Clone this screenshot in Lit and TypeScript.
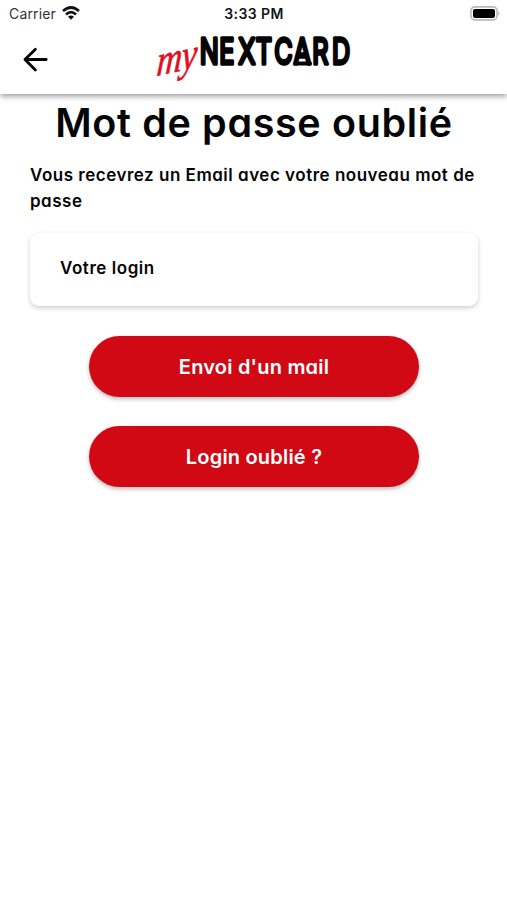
import { LitElement, html, css } from "lit";
import { customElement } from "lit/decorators.js";

@customElement("app-root")
export class AppRoot extends LitElement {
  static styles = css`
    :host { display: block; height: 900px; background: #fff; color: #050505; overflow: hidden;
      font-family: Inter, "Open Sans", sans-serif; font-weight: 600; font-feature-settings: "cv11"; }
    * { box-sizing: border-box; }
    svg { display: block; overflow: visible; }
    .top { height: 94px; background: #fff; box-shadow: 0 2px 6px rgba(0, 0, 0, 0.42); }
    .status { display: grid; grid-template-columns: 1fr auto 1fr; align-items: center; height: 28px;
      padding: 0 7px 0 9px; font-feature-settings: normal; font-size: 14px; }
    .carrier { display: flex; align-items: center; gap: 6px; font-weight: 400; color: #333; font-size: 14px; letter-spacing: 0.15px; margin-top: -1px; }
    .wifi { margin-top: -2px; }
    .clock { letter-spacing: 0.4px; color: #151515; margin: -2px 1px 0 0; }
    .battery { justify-self: end; margin-top: -1px; }
    .bar { display: grid; grid-template-columns: 155px 200px 1fr; height: 66px; }
    .back { padding: 18px 0 0 22px; }
    main { padding: 0 29px 0 30px; }
    h1 { margin: 0; height: 58px; line-height: 58px; font-size: 39.5px; font-weight: 600; text-align: center; white-space: nowrap; letter-spacing: 0.65px; }
    p { margin: 10px 0 0; font-size: 17px; line-height: 26px; white-space: nowrap; letter-spacing: 0.51px; }
    .field { margin-top: 19px; height: 73px; border-radius: 9px; padding: 0 30px; line-height: 70px;
      font-size: 17px; letter-spacing: 0.55px; box-shadow: 0 2px 5px rgba(0, 0, 0, 0.2); }
    .actions { display: flex; flex-direction: column; align-items: center; gap: 29px; padding-top: 30px; }
    button { width: 330px; height: 61px; border: 0; border-radius: 31px; background: #d00914; color: #fff;
      font: inherit; font-feature-settings: inherit; font-size: 20px; letter-spacing: 0.2px; padding: 1px 0 0; box-shadow: 0 2px 4px rgba(0, 0, 0, 0.28); }
    .my { font: italic 400 40px "Liberation Serif", serif; fill: #df1020; stroke: #df1020; stroke-width: 0.6; stroke-linejoin: round; }
    .next { font: 400 36px Inter, sans-serif; font-feature-settings: normal; fill: #050505; stroke: #050505;
      stroke-width: 3.6; stroke-linejoin: round; }
  `;

  render() {
    return html`
      <header class="top">
        <div class="status">
          <span class="carrier">Carrier
            <svg class="wifi" width="18" height="14" viewBox="0 0 18 14" fill="none" stroke="#111" stroke-width="2.7">
              <path d="M1 5Q9-2 17 5M4 8.4Q9 4 14 8.4" /><path d="M9 13.8L6 10.8Q9 8.4 12 10.8Z" fill="#111" stroke="none" />
            </svg>
          </span>
          <span class="clock">3:33 PM</span>
          <svg class="battery" width="30" height="15" viewBox="0 0 30 15">
            <rect x="0.9" y="0.9" width="26.2" height="13" rx="4" fill="#fff" stroke="#b9b9b9" stroke-width="1.6" />
            <rect x="3" y="2.9" width="22" height="9" rx="2" />
            <path d="M28.4 5Q31 7.4 28.4 9.8Z" fill="#b9b9b9" />
          </svg>
        </div>
        <div class="bar">
          <div class="back">
            <svg width="28" height="28" viewBox="0 0 28 28" fill="none" stroke="#000" stroke-width="2.8" stroke-linecap="round" stroke-linejoin="round">
              <path d="M24.2 13.5H3M13.4 3.2L3 13.5L13.4 24" />
            </svg>
          </div>
          <svg width="200" height="62" viewBox="155 28 200 62">
            <text class="my" transform="translate(156 76) rotate(-12) skewX(-16) scale(0.9 1.05)" x="0 28">my</text>
            <text class="next" transform="translate(200 64) scale(0.7 1)" x="-0.5 27.5 54.5 79.5 106 133.5 160.5 188.5">NEXTCARD</text>
            <path d="M297 63.5H310" fill="none" stroke="#050505" stroke-width="4" stroke-linecap="round" />
          </svg>
        </div>
      </header>
      <main>
        <h1>Mot de passe oublié</h1>
        <p>Vous recevrez un Email avec votre nouveau mot de<br />passe</p>
        <div class="field">Votre login</div>
        <div class="actions">
          <button>Envoi d'un mail</button>
          <button>Login oublié ?</button>
        </div>
      </main>
    `;
  }
}
